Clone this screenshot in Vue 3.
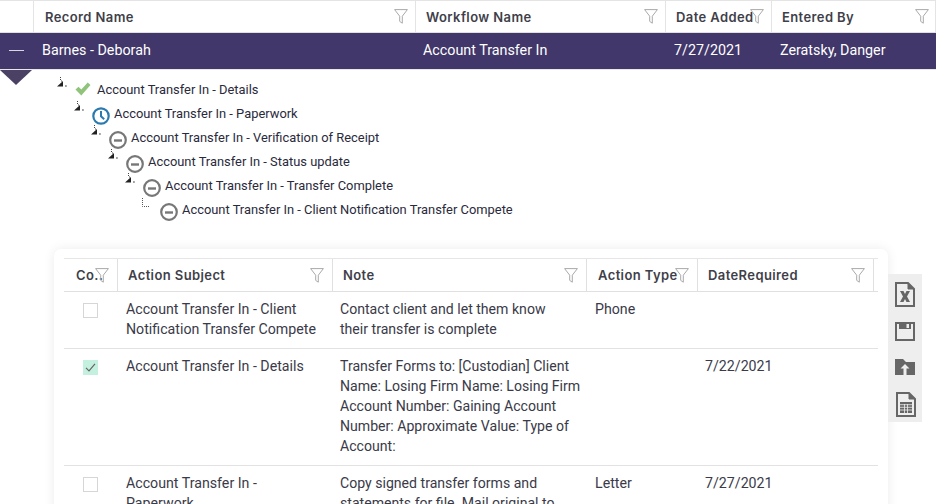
<script setup>
const top = [
  { t: 'Record Name', w: 382 },
  { t: 'Workflow Name', w: 250 },
  { t: 'Date Added', w: 106 },
  { t: 'Entered By', w: 165 },
]
const cols = [
  { t: 'Co..', c: 'c1' },
  { t: 'Action Subject', c: 'c2' },
  { t: 'Note', c: 'c3' },
  { t: 'Action Type', c: 'c4' },
  { t: 'DateRequired', c: 'c5' },
]
const rows = [
  { done: false, subject: 'Account Transfer In - Client Notification Transfer Compete', note: 'Contact client and let them know\ntheir transfer is complete', type: 'Phone', date: '' },
  { done: true, subject: 'Account Transfer In - Details', note: 'Transfer Forms to: [Custodian] Client\nName: Losing Firm Name: Losing Firm\nAccount Number: Gaining Account\nNumber: Approximate Value: Type of\nAccount:', type: '', date: '7/22/2021' },
  { done: false, subject: 'Account Transfer In - Paperwork', note: 'Copy signed transfer forms and\nstatements for file. Mail original to\ncustodian.', type: 'Letter', date: '7/27/2021' },
]
</script>

<template>
  <div class="page">
    <div class="top">
      <div class="thead">
        <div class="th first"></div>
        <div v-for="h in top" :key="h.t" class="th" :style="{ width: h.w + 'px' }">
          <span class="lbl">{{ h.t }}</span>
          <svg class="funnel" viewBox="0 0 14 15"><path d="M.6.6h12.8L8.3 7.2v7L5.7 12.400V7.200z" /></svg>
        </div>
      </div>
      <div class="band">
        <div class="minus"><i></i></div>
        <div class="b1">Barnes - Deborah</div>
        <div class="b2">Account Transfer In</div>
        <div class="b3">7/27/2021</div>
        <div class="b4">Zeratsky, Danger</div>
      </div>
    </div>
    <div class="tri"></div>

    <div class="tree">
      <div class="node"><span class="exp"><svg viewBox="0 0 11 12"><path d="M1 9.500L7 4v5.500z" fill="#222"/><path d="M4 .5h1M4 2.500h1M5 4h1M9 9h1M10.200 9h.8" stroke="#444" fill="none"/></svg></span>
        <svg class="st check" viewBox="0 0 16 16"><path d="M.5 8.500l3-2.700 2.800 2.800L12.700 1.500 15.500 4 6.300 14.500z" fill="#8fc47a"/></svg>
        <span class="nt">Account Transfer In - Details</span></div>
      <div class="sub">
        <div class="node"><span class="exp"><svg viewBox="0 0 11 12"><path d="M1 9.500L7 4v5.500z" fill="#222"/><path d="M4 .5h1M4 2.500h1M5 4h1M9 9h1M10.200 9h.8" stroke="#444" fill="none"/></svg></span>
          <svg class="st" viewBox="0 0 18 18"><circle cx="9" cy="9" r="7.700" fill="none" stroke="#2a7ab0" stroke-width="2.200"/><path d="M9 4v5.200l3.200 3" fill="none" stroke="#2a7ab0" stroke-width="2"/></svg>
          <span class="nt">Account Transfer In - Paperwork</span></div>
        <div class="sub">
          <div class="node"><span class="exp"><svg viewBox="0 0 11 12"><path d="M1 9.500L7 4v5.500z" fill="#222"/><path d="M4 .5h1M4 2.500h1M5 4h1M9 9h1M10.200 9h.8" stroke="#444" fill="none"/></svg></span>
            <svg class="st" viewBox="0 0 18 18"><circle cx="9" cy="9" r="7.800" fill="none" stroke="#777" stroke-width="2.200"/><path d="M5 9.500h8" stroke="#777" stroke-width="2.400"/></svg>
            <span class="nt">Account Transfer In - Verification of Receipt</span></div>
          <div class="sub">
            <div class="node"><span class="exp"><svg viewBox="0 0 11 12"><path d="M1 9.500L7 4v5.500z" fill="#222"/><path d="M4 .5h1M4 2.500h1M5 4h1M9 9h1M10.200 9h.8" stroke="#444" fill="none"/></svg></span>
              <svg class="st" viewBox="0 0 18 18"><circle cx="9" cy="9" r="7.800" fill="none" stroke="#777" stroke-width="2.200"/><path d="M5 9.500h8" stroke="#777" stroke-width="2.400"/></svg>
              <span class="nt">Account Transfer In - Status update</span></div>
            <div class="sub">
              <div class="node"><span class="exp"><svg viewBox="0 0 11 12"><path d="M1 9.500L7 4v5.500z" fill="#222"/><path d="M4 .5h1M4 2.500h1M5 4h1M9 9h1M10.200 9h.8" stroke="#444" fill="none"/></svg></span>
                <svg class="st" viewBox="0 0 18 18"><circle cx="9" cy="9" r="7.800" fill="none" stroke="#777" stroke-width="2.200"/><path d="M5 9.500h8" stroke="#777" stroke-width="2.400"/></svg>
                <span class="nt">Account Transfer In - Transfer Complete</span></div>
              <div class="sub">
                <div class="node"><span class="exp"><svg viewBox="0 0 11 12"><path d="M1.500 1v8.500H9" stroke="#555" stroke-dasharray="1 1" fill="none"/></svg></span>
                  <svg class="st" viewBox="0 0 18 18"><circle cx="9" cy="9" r="7.800" fill="none" stroke="#777" stroke-width="2.200"/><path d="M5 9.500h8" stroke="#777" stroke-width="2.400"/></svg>
                  <span class="nt">Account Transfer In - Client Notification Transfer Compete</span></div>
              </div>
            </div>
          </div>
        </div>
      </div>
    </div>

    <div class="lower">
      <div class="card">
        <div class="grid">
          <div class="ghead">
            <div v-for="c in cols" :key="c.t" class="gh" :class="c.c">
              <span class="lbl">{{ c.t }}</span>
              <svg class="funnel" viewBox="0 0 14 15"><path d="M.6.6h12.8L8.3 7.2v7L5.7 12.400V7.200z" /></svg>
            </div>
            <div class="gh rest"></div>
          </div>
          <div v-for="r in rows" :key="r.subject" class="grow">
            <div class="gc c1 boxcell">
              <span class="box" :class="{ on: r.done }">
                <svg v-if="r.done" viewBox="0 0 15 15"><path d="M3 7.800l3 3 6-7" fill="none" stroke="#666" stroke-width="1.200"/></svg>
              </span>
            </div>
            <div class="gc c2">{{ r.subject }}</div>
            <div class="gc c3">{{ r.note }}</div>
            <div class="gc c4">{{ r.type }}</div>
            <div class="gc c5">{{ r.date }}</div>
          </div>
        </div>
      </div>
      <div class="tools">
        <svg class="i1" viewBox="0 0 20 25"><path d="M1 1h12l6 6v17H1z" fill="none" stroke="#666" stroke-width="2"/><path d="M13 1v6h6z" fill="#666" stroke="#666"/><path d="M5 9h3.500l1.500 3 1.500-3H15l-3 5.500 3 5.500h-3.500L10 17l-1.500 3H5l3-5.500z" fill="#666"/></svg>
        <svg class="i2" viewBox="0 0 20 19"><path d="M1 1h18v17H1z" fill="none" stroke="#666" stroke-width="2"/><path d="M4 1h12v6H4z" fill="#666"/><path d="M11.500 2H14v4h-2.500z" fill="#eee"/></svg>
        <svg class="i3" viewBox="0 0 20 16"><path d="M0 0h8l3 3h9v13H0z" fill="#666"/><path d="M10 5l4.500 4.500h-3V16h-3V9.500h-3z" fill="#eee"/></svg>
        <svg class="i4" viewBox="0 0 20 25"><path d="M1 1h12l6 6v17H1z" fill="none" stroke="#666" stroke-width="2"/><path d="M13 1v6h6z" fill="#666" stroke="#666"/><path d="M4 10h12v11H4z" fill="#666"/><path d="M4 12.700h12M4 15.300h12M4 18h12M8.500 12v9M11.500 12v9" stroke="#eee" stroke-width=".8"/></svg>
      </div>
    </div>
  </div>
</template>

<style scoped>
.page {
  width: 942px;
  height: 504px;
  overflow: hidden;
  background: #fff;
  font-family: Roboto, "Liberation Sans", sans-serif;
  font-size: 14.300px;
  color: #2b2b3a;
  position: relative;
}
.top { width: 936px; }
.thead {
  display: flex;
  height: 33px;
  box-sizing: border-box;
  border-top: 1px solid #e4e4e4;
  border-bottom: 1px solid #e0e0e0;
  border-right: 1px solid #e4e4e4;
}
.th {
  box-sizing: border-box;
  display: flex;
  align-items: center;
  justify-content: space-between;
  padding: 0 7px 0 10px;
  border-left: 1px solid #e4e4e4;
  flex: none;
}
.th.first { width: 33px; border-left: 0; }
.th.first + .th { padding-left: 11px; }
.lbl {
  font-family: Inter, Roboto, sans-serif;
  font-weight: 600;
  font-size: 13px;
  letter-spacing: 0.4px;
  color: #3f3f4a;
  white-space: nowrap;
}
.funnel {
  width: 14px;
  height: 15px;
  flex: none;
  fill: none;
  stroke: #a9a9a9;
  stroke-width: 1;
  margin-left: -14px;
}
.band {
  height: 34px;
  padding-bottom: 2px;
  background: #41376a;
  color: #fff;
  display: flex;
  align-items: center;
  border-bottom: 1px solid #e8e8e8;
}
.minus { width: 42px; flex: none; padding-left: 9px; box-sizing: border-box; }
.minus i { display: block; width: 15px; height: 1px; background: #d8d6e2; }
.b1 { width: 381px; flex: none; }
.b2 { width: 251px; flex: none; }
.b3 { width: 106px; flex: none; }
.b4 { flex: none; white-space: nowrap; }
.tri {
  width: 0;
  height: 0;
  border-left: 16px solid transparent;
  border-right: 16px solid transparent;
  border-top: 15px solid #4a4165;
}
.tree { margin-top: -8px; padding-left: 56px; color: #2a2a3c; font-size: 12.900px; }
.node { display: flex; align-items: center; height: 24px; white-space: nowrap; }
.sub { margin-left: 17px; }
.exp { width: 11px; height: 12px; flex: none; margin-top: -12px; margin-right: 8px; display: block; }
.exp svg { display: block; width: 11px; height: 12px; }
.st { width: 18px; height: 18px; flex: none; margin-right: 4px; margin-top: 5px; }
.st.check { width: 16px; height: 16px; margin-right: 6px; margin-top: 0; }
.lower {
  display: flex;
  align-items: flex-start;
  margin: 28px 0 0 54px;
}
.card {
  width: 834px;
  flex: none;
  box-sizing: border-box;
  padding: 9px 10px 0;
  background: #fff;
  border-radius: 7px;
  box-shadow: 0 0 12px rgba(0, 0, 0, 0.08);
  height: 300px;
  overflow: hidden;
}
.grid { width: 814px; border-top: 1px solid #e6e6e6; }
.ghead { display: flex; height: 32px; border-bottom: 1px solid #e0e0e0; }
.gh {
  box-sizing: border-box;
  display: flex;
  align-items: center;
  justify-content: space-between;
  padding: 0 8px 0 10px;
  border-right: 1px solid #e0e0e0;
  flex: none;
}
.gh.rest { width: 4px; border: 0; padding: 0; }
.c1 { width: 54px; flex: none; }
.c2 { width: 215px; flex: none; }
.c3 { width: 254px; flex: none; }
.c4 { width: 111px; flex: none; }
.c5 { width: 176px; flex: none; }
.gh.c1 { padding-left: 12px; }
.gh.c4 { padding-left: 11px; }
.grow {
  display: flex;
  border-bottom: 1px solid #e2e2e2;
  padding: 7px 0 9px;
}
.gc {
  box-sizing: border-box;
  padding: 0 8px;
  line-height: 20px;
  color: #3a3a48;
  font-size: 14.200px;
}
.gc.c3, .gc.c5 { padding-left: 7px; }
.gc.c3 { padding-right: 0; white-space: pre-line; font-size: 14.100px; }
.boxcell { padding: 4px 0 0 19px; }
.box {
  display: block;
  width: 15px;
  height: 15px;
  box-sizing: border-box;
  border: 1px solid #d6d6d6;
  background: #fff;
}
.box.on { background: #c4f0e0; border: 0; }
.box svg { display: block; width: 15px; height: 15px; }
.tools {
  width: 34px;
  height: 148px;
  margin-top: 25px;
  flex: none;
  background: #eeeeee;
  box-sizing: border-box;
  padding: 8px 7px;
  display: flex;
  flex-direction: column;
}
.tools svg { width: 20px; display: block; flex: none; }
.tools .i1 { height: 25px; }
.tools .i2 { height: 19px; margin-top: 15px; }
.tools .i3 { height: 16px; margin-top: 18px; }
.tools .i4 { height: 25px; margin-top: 17px; margin-left: 1px; }
</style>
